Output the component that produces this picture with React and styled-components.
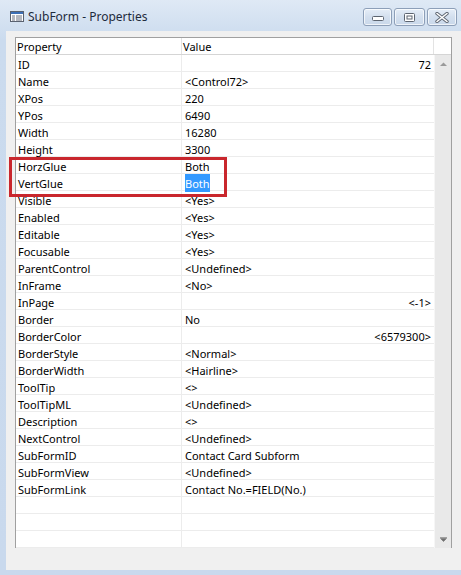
import React from 'react';
import styled, { createGlobalStyle } from 'styled-components';

const GlobalStyle = createGlobalStyle`
  html, body { margin: 0; padding: 0; background: #c9d9ed; }
  * { box-sizing: border-box; }
`

const rows = [
  ['ID', '72', 'right'],
  ['Name', '<Control72>'],
  ['XPos', '220'],
  ['YPos', '6490'],
  ['Width', '16280'],
  ['Height', '3300'],
  ['HorzGlue', 'Both'],
  ['VertGlue', 'Both', 'selected'],
  ['Visible', '<Yes>'],
  ['Enabled', '<Yes>'],
  ['Editable', '<Yes>'],
  ['Focusable', '<Yes>'],
  ['ParentControl', '<Undefined>'],
  ['InFrame', '<No>'],
  ['InPage', '<-1>', 'right'],
  ['Border', 'No'],
  ['BorderColor', '<6579300>', 'right'],
  ['BorderStyle', '<Normal>'],
  ['BorderWidth', '<Hairline>'],
  ['ToolTip', '<>'],
  ['ToolTipML', '<Undefined>'],
  ['Description', '<>'],
  ['NextControl', '<Undefined>'],
  ['SubFormID', 'Contact Card Subform'],
  ['SubFormView', '<Undefined>'],
  ['SubFormLink', 'Contact No.=FIELD(No.)'],
  ['', ''],
  ['', ''],
  ['', ''],
];

const Window = styled.div`
position: relative;
width: 461px;
height: 575px;
display: flex;
flex-direction: column;
background: linear-gradient(#dfe9f5, #cbdbee 40px, #c9d9ed);
font-family: "Noto Sans", "Liberation Sans", sans-serif;
overflow: hidden;
`

const TitleBar = styled.div`
height: 31px;
flex: none;
display: flex;
align-items: center;
padding: 2px 4px 0 10px;
`

const TitleText = styled.div`
margin-left: 4px;
font-size: 12px;
color: #1e2b3c;
flex: 1;
`

const CaptionButtons = styled.div`
display: flex;
gap: 2px;
align-self: flex-start;
margin-top: 6px;
`

const CaptionButton = styled.div`
width: ${p => p.$w}px;
height: 18px;
border: 1px solid #8d9fb8;
border-radius: 3px;
box-shadow: inset 0 0 0 1px rgba(255,255,255,0.7);
background: linear-gradient(#e6eef8, #d3dfee 50%, #c9d8ea);
display: flex;
align-items: center;
justify-content: center;
`

const Client = styled.div`
flex: 1;
margin: 0 0 5px 6px;
background: #f0f0f0;
padding: 6px 9px 22px 9px;
display: flex;
`

const Grid = styled.div`
flex: 1;
display: flex;
flex-direction: column;
background: #fff;
border: 1px solid #a0a0a0;
border-bottom: none;
font-size: 11px;
color: #000;
`

const HeaderRow = styled.div`
display: grid;
grid-template-columns: 166px 252px 1fr;
grid-template-rows: 16px;
height: 17px;
border-bottom: 1px solid #d5d5d5;
`

const HeaderCell = styled.div`
padding: 2px 0 0 1px;
line-height: 14px;
border-right: 1px solid #e3e3e3;
&:last-child { border-right: none; }
`

const Body = styled.div`
flex: 1;
display: flex;
`

const RowsArea = styled.div`
flex: 1;
`

const Row = styled.div`
display: grid;
grid-template-columns: 166px 1fr;
grid-template-rows: 16px;
height: 17px;
border-bottom: 1px solid #ececec;
`

const NameCell = styled.div`
padding: 3px 0 0 2px;
line-height: 13px;
border-right: 1px solid #ececec;
white-space: nowrap;
`

const ValueCell = styled.div`
padding: 3px 3px 0;
line-height: 13px;
text-align: ${p => (p.$right ? 'right' : 'left')};
white-space: nowrap;
`

const Selected = styled.span`
background: #3399ff;
color: #fff;
padding: 2px 0 1px;
`

const Scrollbar = styled.div`
width: 17px;
flex: none;
background: #e9e9e9;
border-left: 1px solid #f6f6f6;
display: flex;
flex-direction: column;
justify-content: space-between;
align-items: center;
padding: 7px 0 6px;
`

const Highlight = styled.div`
position: absolute;
left: 9px;
top: 157px;
width: 218px;
height: 40px;
border: 3px solid #c9272d;
`

function TitleIcon() {
  return (
    <svg width="14" height="11" viewBox="0 0 14 11">
      <rect x="0.5" y="0.5" width="13" height="10" fill="#fff" stroke="#5a6270" />
      <rect x="1" y="1" width="12" height="2" fill="#3c6fb6" />
      <path d="M2 5h3M6 5h6M2 7h3M6 7h6M2 9h3M6 9h6" stroke="#6a7180" strokeWidth="1" />
    </svg>
  );
}

function Arrow({ down }) {
  return (
    <svg width="7" height="5" viewBox="0 0 7 5">
      {down
        ? <path d="M0 0.5h7M0.5 1.5h6L3.5 4.5z" fill="#707070" stroke="#707070" strokeWidth="0.6" />
        : <path d="M3.5 0.5L7 4H0z" fill="#9a9a9a" />}
    </svg>
  );
}

class App extends React.Component {
  render() {
    return (
      <Window>
        <GlobalStyle />
        <TitleBar>
          <TitleIcon />
          <TitleText>SubForm - Properties</TitleText>
          <CaptionButtons>
            <CaptionButton $w={29}>
              <svg width="12" height="8" viewBox="0 0 12 8">
                <rect x="0.5" y="3.5" width="11" height="4" rx="1" fill="#fff" stroke="#5c6470" />
              </svg>
            </CaptionButton>
            <CaptionButton $w={31}>
              <svg width="11" height="9" viewBox="0 0 11 9">
                <rect x="0.5" y="0.5" width="10" height="8" rx="1" fill="#fff" stroke="#5c6470" />
                <rect x="3" y="3" width="5" height="3" fill="none" stroke="#5c6470" />
              </svg>
            </CaptionButton>
            <CaptionButton $w={30}>
              <svg width="14" height="11" viewBox="0 0 14 11">
                <path d="M2 1.5l10 8M12 1.5l-10 8" stroke="#5c6470" strokeWidth="3.4" strokeLinecap="round" />
                <path d="M2 1.5l10 8M12 1.5l-10 8" stroke="#fff" strokeWidth="1.6" strokeLinecap="round" />
              </svg>
            </CaptionButton>
          </CaptionButtons>
        </TitleBar>
        <Client>
          <Grid>
            <HeaderRow>
              <HeaderCell>Property</HeaderCell>
              <HeaderCell>Value</HeaderCell>
              <HeaderCell />
            </HeaderRow>
            <Body>
              <RowsArea>
                {rows.map(([name, value, kind], i) => (
                  <Row key={i}>
                    <NameCell>{name}</NameCell>
                    <ValueCell $right={kind === 'right'}>
                      {kind === 'selected' ? <Selected>{value}</Selected> : value}
                    </ValueCell>
                  </Row>
                ))}
              </RowsArea>
              <Scrollbar>
                <Arrow />
                <Arrow down />
              </Scrollbar>
            </Body>
          </Grid>
        </Client>
        <Highlight />
      </Window>
    );
  }
}

export default App;
